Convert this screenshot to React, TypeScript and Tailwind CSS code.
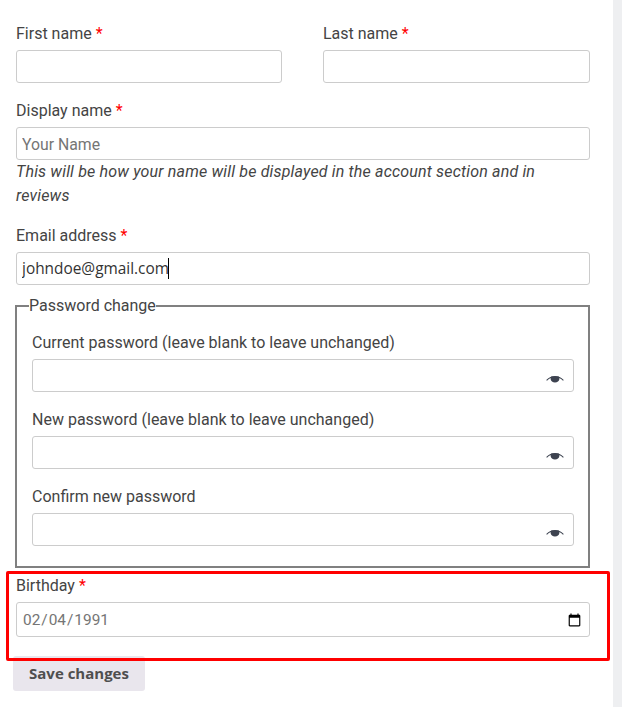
const inputBase =
  "block w-full h-[33px] rounded-[3px] border border-[#cccccc] bg-white px-[5px] text-[#333333] outline-none";
const inputCls = inputBase + " text-[15px]";

function Label({ text, required }: { text: string; required?: boolean }) {
  return (
    <label className="block h-6 mb-[4px] text-[16px] leading-6 text-[#444444]">
      {text}
      {required && <span className="text-[#ff0000]"> *</span>}
    </label>
  );
}

function EyeIcon() {
  return (
    <svg
      className="absolute right-[10px] top-[16px]"
      width="18"
      height="10"
      viewBox="0 0 18 10"
      aria-hidden="true"
    >
      <path d="M0.600 5.400C3.400 2.600 6 1.500 9 1.500s5.600 1.100 8.400 3.900" fill="none" stroke="#3d4350" strokeWidth="1.1" />
      <path d="M5.200 1.600h7.600c.5.800.7 1.600.6 2.500-.3 2-2 3.400-4.400 3.400S4.900 6.100 4.600 4.100c-.1-.9.1-1.700.6-2.500z" fill="#3d4350" />
    </svg>
  );
}

function PasswordField({ text, last }: { text: string; last?: boolean }) {
  return (
    <div className={last ? "" : "mb-[16px]"}>
      <Label text={text} />
      <div className="relative">
        <input type="text" className={inputCls} readOnly />
        <EyeIcon />
      </div>
    </div>
  );
}

export default function App() {
  return (
    <div
      className="relative flex h-[707px] w-[622px] overflow-hidden bg-white"
      style={{ fontFamily: "Roboto, sans-serif" }}
    >
      <main className="w-[613px] shrink-0 pl-4 pr-[23px] pt-[22px]">
        <div className="mb-[16px] flex gap-[41px]">
          <div className="w-[266px]">
            <Label text="First name" required />
            <input type="text" className={inputCls} readOnly />
          </div>
          <div className="w-[267px]">
            <Label text="Last name" required />
            <input type="text" className={inputCls} readOnly />
          </div>
        </div>

        <div className="mb-[16px]">
          <Label text="Display name" required />
          <input
            type="text"
            className={inputBase + " pt-[2px] text-[15.8px] placeholder:text-[#757575]"}
            placeholder="Your Name"
            readOnly
          />
          <p className="text-[16px] leading-6 italic tracking-[0.17px] text-[#444444]">
            This will be how your name will be displayed in the account section and in reviews
          </p>
        </div>

        <div className="mb-[9px]">
          <Label text="Email address" required />
          <div className="relative">
            <input
              type="text"
              className={inputBase + " text-[15.4px] font-['Open_Sans']"}
              value="johndoe@gmail.com"
              readOnly
            />
            <span className="absolute left-[152px] top-[6px] h-[21px] w-px bg-black" />
          </div>
        </div>

        <fieldset className="w-[575px] -ml-px border-2 border-[#808080] pl-[15px] pr-[14px] pb-[20px] pt-[13px]">
          <legend className="-ml-[3px] text-[16px] leading-6 text-[#444444]">Password change</legend>
          <PasswordField text="Current password (leave blank to leave unchanged)" />
          <PasswordField text="New password (leave blank to leave unchanged)" />
          <PasswordField text="Confirm new password" last />
        </fieldset>

        <div className="mt-[6px]">
          <Label text="Birthday" required />
          <input
            type="date"
            className={inputBase + " h-[35px] pt-[3px] text-[15.4px] text-[#757575]"}
            defaultValue="1991-02-04"
          />
        </div>

        <button
          type="button"
          className="-ml-[3px] mt-[19px] h-[35px] w-[132px] rounded-[3px] bg-[#e9e6ed] text-[15px] font-bold text-[#4f4f4f]"
          style={{ fontFamily: "'Open Sans', sans-serif" }}
        >
          Save changes
        </button>
      </main>

      <div className="w-[9px] shrink-0 bg-[#eeeff1]" />

      <div className="pointer-events-none absolute left-[6px] top-[571px] h-[90px] w-[604px] rounded-[2px] border-[3px] border-[#ff0000]" />
    </div>
  );
}
